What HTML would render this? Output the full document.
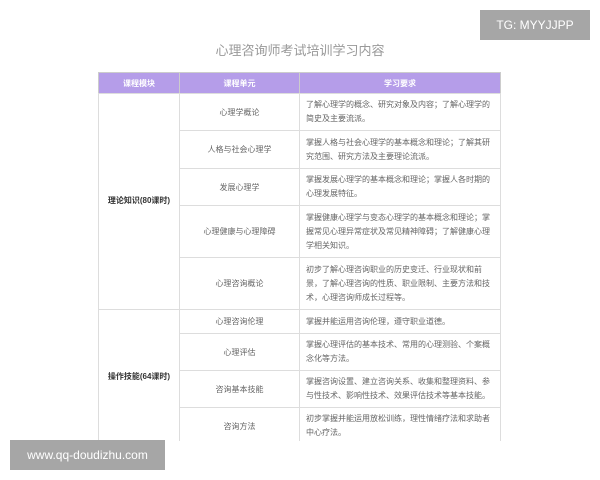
<!DOCTYPE html>
<html><head><meta charset="utf-8"><style>
*{margin:0;padding:0;box-sizing:border-box}
body{width:600px;height:480px;background:#fff;position:relative;overflow:hidden;font-family:"Liberation Sans","Noto Sans CJK SC",sans-serif}
.c{position:absolute;display:flex;align-items:center;justify-content:center;text-align:center;color:#666;font-size:8px;border:1px solid #ddd;background:#fff}
.h{background:#b59de9;color:#fff;border-color:#ccc;font-weight:bold}
.l{justify-content:flex-start;text-align:left;padding:0 6px;line-height:14px;color:#666}
.m{color:#333;font-weight:bold;font-size:8px}
.wm{position:absolute;background:#a6a6a6;color:#fff;display:flex;align-items:center;justify-content:center}
</style></head><body>
<div style="position:absolute;left:0;top:40px;width:600px;text-align:center;font-size:13px;color:#999">心理咨询师考试培训学习内容</div>

<div class="c h" style="left:98px;top:72px;width:82px;height:22px">课程模块</div>
<div class="c h" style="left:179px;top:72px;width:121px;height:22px">课程单元</div>
<div class="c h" style="left:299px;top:72px;width:202px;height:22px">学习要求</div>

<div class="c m" style="left:98px;top:93px;width:82px;height:217px;align-items:flex-end;padding-bottom:103px">理论知识(80课时)</div>
<div class="c m" style="left:98px;top:309px;width:82px;height:135px">操作技能(64课时)</div>

<div class="c" style="left:179px;top:93px;width:121px;height:38px">心理学概论</div>
<div class="c l" style="left:299px;top:93px;width:202px;height:38px">了解心理学的概念、研究对象及内容；了解心理学的简史及主要流派。</div>
<div class="c" style="left:179px;top:130px;width:121px;height:39px">人格与社会心理学</div>
<div class="c l" style="left:299px;top:130px;width:202px;height:39px">掌握人格与社会心理学的基本概念和理论；了解其研究范围、研究方法及主要理论流派。</div>
<div class="c" style="left:179px;top:168px;width:121px;height:38px">发展心理学</div>
<div class="c l" style="left:299px;top:168px;width:202px;height:38px">掌握发展心理学的基本概念和理论；掌握人各时期的心理发展特征。</div>
<div class="c" style="left:179px;top:205px;width:121px;height:53px">心理健康与心理障碍</div>
<div class="c l" style="left:299px;top:205px;width:202px;height:53px">掌握健康心理学与变态心理学的基本概念和理论；掌握常见心理异常症状及常见精神障碍；了解健康心理学相关知识。</div>
<div class="c" style="left:179px;top:257px;width:121px;height:53px">心理咨询概论</div>
<div class="c l" style="left:299px;top:257px;width:202px;height:53px">初步了解心理咨询职业的历史变迁、行业现状和前景，了解心理咨询的性质、职业限制、主要方法和技术，心理咨询师成长过程等。</div>
<div class="c" style="left:179px;top:309px;width:121px;height:25px">心理咨询伦理</div>
<div class="c l" style="left:299px;top:309px;width:202px;height:25px">掌握并能运用咨询伦理，遵守职业道德。</div>
<div class="c" style="left:179px;top:333px;width:121px;height:38px">心理评估</div>
<div class="c l" style="left:299px;top:333px;width:202px;height:38px">掌握心理评估的基本技术、常用的心理测验、个案概念化等方法。</div>
<div class="c" style="left:179px;top:370px;width:121px;height:38px">咨询基本技能</div>
<div class="c l" style="left:299px;top:370px;width:202px;height:38px">掌握咨询设置、建立咨询关系、收集和整理资料、参与性技术、影响性技术、效果评估技术等基本技能。</div>
<div class="c" style="left:179px;top:407px;width:121px;height:38px">咨询方法</div>
<div class="c l" style="left:299px;top:407px;width:202px;height:38px">初步掌握并能运用放松训练，理性情绪疗法和求助者中心疗法。</div>
<div style="position:absolute;left:0;top:441px;width:600px;height:39px;background:#fff"></div>

<div class="wm" style="left:480px;top:10px;width:110px;height:30px;font-size:12px">TG: MYYJJPP</div>
<div class="wm" style="left:10px;top:440px;width:155px;height:30px;font-size:12px">www.qq-doudizhu.com</div>
</body></html>
